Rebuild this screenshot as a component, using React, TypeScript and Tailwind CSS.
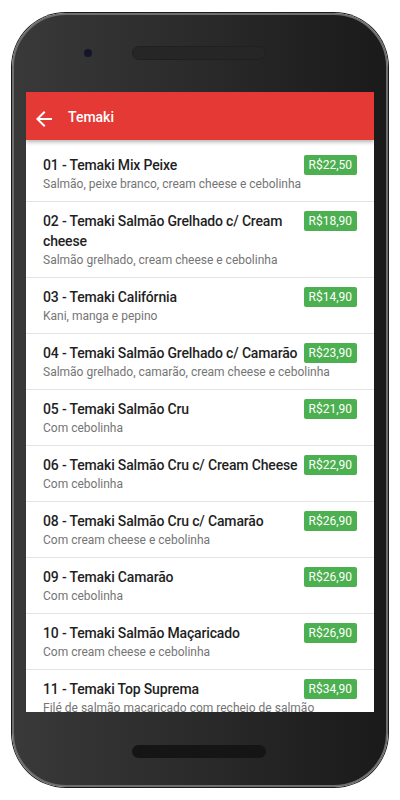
import React from "react";

const items = [
  { t: "01 - Temaki Mix Peixe", d: "Salmão, peixe branco, cream cheese e cebolinha", p: "R$22,50" },
  { t: "02 - Temaki Salmão Grelhado c/ Cream cheese", d: "Salmão grelhado, cream cheese e cebolinha", p: "R$18,90", wrap: true },
  { t: "03 - Temaki Califórnia", d: "Kani, manga e pepino", p: "R$14,90" },
  { t: "04 - Temaki Salmão Grelhado c/ Camarão", d: "Salmão grelhado, camarão, cream cheese e cebolinha", p: "R$23,90" },
  { t: "05 - Temaki Salmão Cru", d: "Com cebolinha", p: "R$21,90" },
  { t: "06 - Temaki Salmão Cru c/ Cream Cheese", d: "Com cebolinha", p: "R$22,90" },
  { t: "08 - Temaki Salmão Cru c/ Camarão", d: "Com cream cheese e cebolinha", p: "R$26,90" },
  { t: "09 - Temaki Camarão", d: "Com cebolinha", p: "R$26,90" },
  { t: "10 - Temaki Salmão Maçaricado", d: "Com cream cheese e cebolinha", p: "R$26,90" },
  { t: "11 - Temaki Top Suprema", d: "Filé de salmão maçaricado com recheio de salmão", p: "R$34,90" },
];

export default function App() {
  return (
    <div className="w-[400px] h-[800px] bg-white overflow-hidden" style={{ fontFamily: "Roboto, 'Noto Sans', sans-serif" }}>
      <div className="pt-[13px] pl-[12px]">
        <div className="w-[376px] h-[774px] rounded-[54px] border-2 border-[#6e6e6e] bg-gradient-to-r from-[#393939] via-[#2a2a2a] to-[#1a1a1a] shadow-[0_0_0_1px_#1a1a1a] flex flex-col">
          <div className="flex items-center pt-[31px] pl-[70px] h-[44px]">
            <div className="w-[8px] h-[8px] rounded-full bg-[#15152a]" />
            <div className="ml-[40px] w-[134px] h-[14px] rounded-full bg-[#262626] border border-[#202020]" />
          </div>
          <div className="mt-[33px] ml-[12px] w-[348px] h-[620px] bg-white overflow-hidden flex flex-col">
            <div className="h-[48px] shrink-0 bg-[#e53935] flex items-center relative z-10 shadow-[0_2px_4px_rgba(0,0,0,0.3)]">
              <svg className="ml-[6px] mt-[5px]" width="24" height="24" viewBox="0 0 24 24" fill="#ffffff">
                <path d="M20 11H7.83l5.59-5.59L12 4l-8 8 8 8 1.41-1.41L7.83 13H20v-2z" />
              </svg>
              <span className="ml-[12px] mt-[2px] text-white text-[14px] font-medium leading-none">Temaki</span>
            </div>
            <div className="pt-[6px]">
              {items.map((it, i) => (
                <div key={i} className={`px-[17px] pt-[9px] pb-[8px] ${i < items.length - 1 ? "border-b border-[#e4e4e4]" : ""}`}>
                  <div className="flex items-start">
                    <div className={`flex-1 min-w-0 text-[14px] leading-[20px] font-medium tracking-[-0.16px] text-[#1f1f1f] ${it.wrap ? "" : "whitespace-nowrap"}`}>{it.t}</div>
                    <div className="ml-[6px] h-[20px] px-[5px] rounded-[2px] bg-[#4caf50] text-white text-[12px] leading-[20px] shrink-0">{it.p}</div>
                  </div>
                  <div className="text-[12px] leading-[18px] text-[#757575] whitespace-nowrap">{it.d}</div>
                </div>
              ))}
            </div>
          </div>
          <div className="mt-[33px] ml-[118px] w-[134px] h-[13px] rounded-full bg-[#151515]" />
        </div>
      </div>
    </div>
  );
}
